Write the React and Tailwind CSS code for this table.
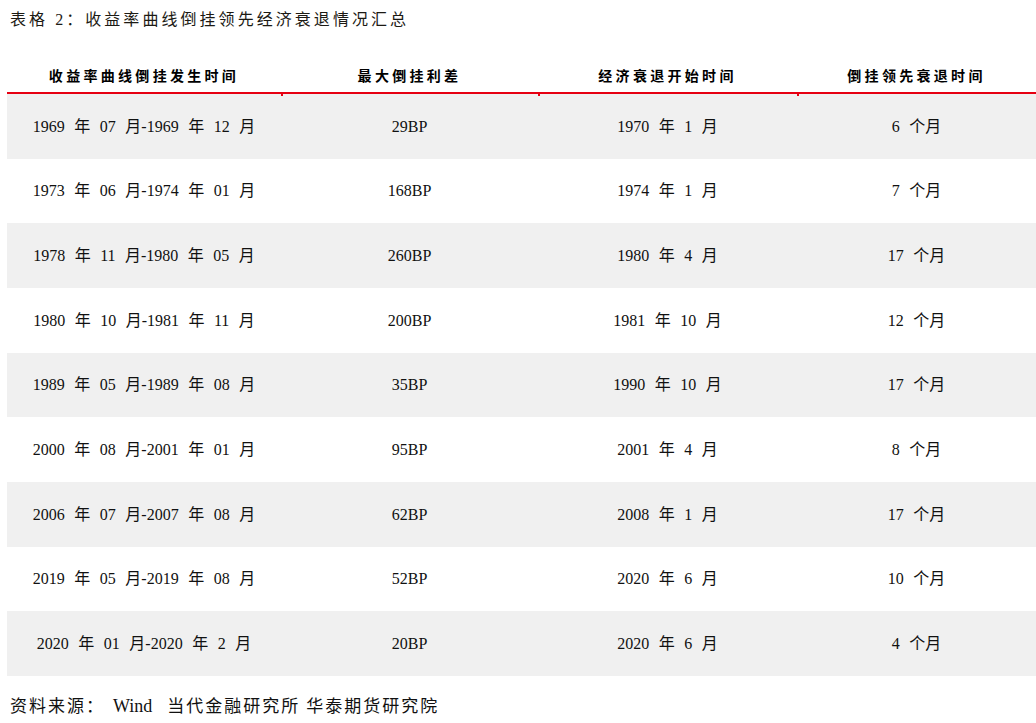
import React from "react";

const rows = [
  ["1969 年 07 月-1969 年 12 月", "29BP", "1970 年 1 月", "6 个月"],
  ["1973 年 06 月-1974 年 01 月", "168BP", "1974 年 1 月", "7 个月"],
  ["1978 年 11 月-1980 年 05 月", "260BP", "1980 年 4 月", "17 个月"],
  ["1980 年 10 月-1981 年 11 月", "200BP", "1981 年 10 月", "12 个月"],
  ["1989 年 05 月-1989 年 08 月", "35BP", "1990 年 10 月", "17 个月"],
  ["2000 年 08 月-2001 年 01 月", "95BP", "2001 年 4 月", "8 个月"],
  ["2006 年 07 月-2007 年 08 月", "62BP", "2008 年 1 月", "17 个月"],
  ["2019 年 05 月-2019 年 08 月", "52BP", "2020 年 6 月", "10 个月"],
  ["2020 年 01 月-2020 年 2 月", "20BP", "2020 年 6 月", "4 个月"],
];

const headers = ["收益率曲线倒挂发生时间", "最大倒挂利差", "经济衰退开始时间", "倒挂领先衰退时间"];

const font = { fontFamily: '"Liberation Serif", "Noto Sans CJK SC", serif' };

export default function App() {
  return (
    <div className="w-[1036px] h-[723px] bg-white overflow-hidden text-[#111]" style={font}>
      {/* Title */}
      <div className="mt-[8px] pl-[10px] text-[16px] leading-[24px] tracking-[3.05px] text-[#1c1a14]">
        表格 2：收益率曲线倒挂领先经济衰退情况汇总
      </div>

      {/* Header */}
      <div className="ml-[7px] h-[62px] grid grid-cols-[274px_257px_259px_239px] items-end border-b-2 border-[#e60012]">
        {headers.map((h, i) => (
          <div
            key={h}
            className="relative pb-[5px] text-center text-[14px] leading-[20px] font-bold tracking-[3.3px] text-black"
          >
            {h}
            {i > 0 && (
              <span className="absolute left-0 -bottom-[4px] w-[2px] h-[2px] bg-[#e60012]" />
            )}
          </div>
        ))}
      </div>

      {/* Body */}
      <div className="ml-[7px]">
        {rows.map((r, i) => (
          <div
            key={i}
            className={`h-[64.67px] grid grid-cols-[274px_257px_259px_239px] items-center text-[16px] leading-[24px] [word-spacing:5.5px] pt-[1px] ${
              i % 2 === 0 ? "bg-[#f0f0f0]" : "bg-white"
            }`}
          >
            {r.map((c, j) => (
              <div key={j} className="text-center">
                {c}
              </div>
            ))}
          </div>
        ))}
      </div>

      {/* Source */}
      <div className="mt-[18px] pl-[10px] flex items-baseline text-[17px] leading-[24px] text-[#111]">
        <span className="tracking-[2px]">资料来源：</span>
        <span className="ml-[8px] text-[18px]">Wind</span>
        <span className="ml-[15px] tracking-[2px]">当代金融研究所</span>
        <span className="ml-[6px] tracking-[2px]">华泰期货研究院</span>
      </div>
    </div>
  );
}
